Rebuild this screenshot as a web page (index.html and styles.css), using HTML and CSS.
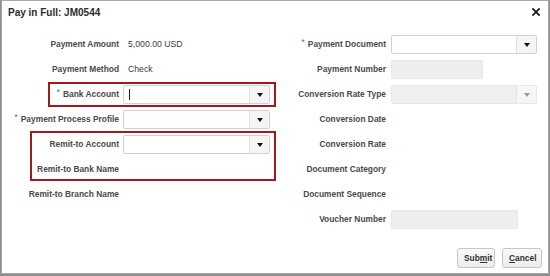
FILE: index.html
```html
<!DOCTYPE html>
<html>
<head>
<meta charset="utf-8">
<link rel="stylesheet" href="styles.css">
</head>
<body>
<div class="dialog">
  <div class="header">
    <span class="title">Pay in Full: JM0544</span>
    <span class="close"><svg width="8" height="8" viewBox="0 0 8 8"><path d="M1 1L7 7M7 1L1 7" stroke="#222" stroke-width="1.8" stroke-linecap="square"/></svg></span>
  </div>
  <div class="form">
    <div class="lbl l">Payment Amount</div>
    <div class="val">5,000.00 USD</div>
    <div class="lbl r"><span class="req">*</span>Payment Document</div>
    <div class="cell"><div class="select w146"><div class="inp"></div><div class="btn"><i class="tri"></i></div></div></div>

    <div class="lbl l">Payment Method</div>
    <div class="val">Check</div>
    <div class="lbl r">Payment Number</div>
    <div class="cell"><div class="ro w92"></div></div>

    <div class="lbl l"><span class="req">*</span>Bank Account</div>
    <div class="cell"><div class="select w147"><div class="inp"><span class="caret"></span></div><div class="btn"><i class="tri"></i></div></div></div>
    <div class="lbl r">Conversion Rate Type</div>
    <div class="cell"><div class="select dis w146"><div class="inp"></div><div class="btn"><i class="tri"></i></div></div></div>

    <div class="lbl l"><span class="req">*</span>Payment Process Profile</div>
    <div class="cell"><div class="select w147"><div class="inp"></div><div class="btn"><i class="tri"></i></div></div></div>
    <div class="lbl r">Conversion Date</div>
    <div class="cell"></div>

    <div class="lbl l">Remit-to Account</div>
    <div class="cell"><div class="select w147"><div class="inp"></div><div class="btn"><i class="tri"></i></div></div></div>
    <div class="lbl r">Conversion Rate</div>
    <div class="cell"></div>

    <div class="lbl l">Remit-to Bank Name</div>
    <div class="cell"></div>
    <div class="lbl r">Document Category</div>
    <div class="cell"></div>

    <div class="lbl l">Remit-to Branch Name</div>
    <div class="cell"></div>
    <div class="lbl r">Document Sequence</div>
    <div class="cell"></div>

    <div class="lbl l"></div>
    <div class="cell"></div>
    <div class="lbl r">Voucher Number</div>
    <div class="cell"><div class="ro w127"></div></div>
  </div>
  <div class="footer">
    <button class="button">Sub<u>m</u>it</button>
    <button class="button"><u>C</u>ancel</button>
  </div>
  <div class="mark mark1"></div>
  <div class="mark mark2"></div>
</div>
</body>
</html>
```

FILE: styles.css
```css
html, body {
  margin: 0;
  padding: 0;
}
body {
  width: 550px;
  height: 276px;
  background: #8e8e8e;
  overflow: hidden;
  font-family: "Liberation Sans", Arial, sans-serif;
  color: #333;
}
.dialog {
  position: relative;
  margin-left: 1px;
  width: 546px;
  height: 272px;
  border: 1px solid #a8a8a8;
  background: #fff;
}
.header {
  height: 22px;
  display: flex;
  align-items: center;
  justify-content: space-between;
  padding: 0 8px 0 6px;
}
.title {
  font-size: 10px;
  font-weight: bold;
  color: #2b2b2b;
  padding-top: 1px;
}
.close {
  display: flex;
  width: 8px;
  height: 8px;
  margin-top: -1px;
}
.form {
  margin-top: 8.5px;
  display: grid;
  grid-template-columns: 121px 150px 118px 152px;
  grid-auto-rows: 25px;
  align-items: center;
}
.lbl {
  font-size: 8.4px;
  font-weight: bold;
  color: #4a4a4a;
  text-align: right;
  white-space: nowrap;
}
.lbl.l { padding-right: 4px; }
.lbl.r { padding-right: 5px; }
.req {
  color: #3d7ac2;
  font-weight: normal;
  font-size: 9px;
  margin-right: 3px;
  position: relative;
  top: -2px;
}
.val {
  font-size: 8.7px;
  color: #3a3a3a;
  padding-left: 5px;
}
.cell {
  display: flex;
  align-items: center;
}
.select {
  box-sizing: border-box;
  height: 19px;
  display: flex;
  border: 1px solid #d2d2d2;
  border-radius: 2px;
  background: #fff;
}
.w146 { width: 146px; }
.w147 { width: 147px; }
.w92 { width: 92px; }
.w127 { width: 127px; }
.inp {
  flex: 1;
  display: flex;
  align-items: center;
  padding-left: 5px;
}
.caret {
  display: block;
  width: 1px;
  height: 11px;
  background: #222;
}
.btn {
  width: 19px;
  border-left: 1px solid #e2e2e2;
  background: #f5f5f5;
  display: flex;
  align-items: center;
  justify-content: center;
}
.tri {
  display: block;
  width: 0;
  height: 0;
  border-left: 3.5px solid transparent;
  border-right: 3.5px solid transparent;
  border-top: 4px solid #111;
  margin-top: 1px;
}
.select.dis {
  background: #efefef;
  border-color: #e6e6e6;
}
.select.dis .btn {
  background: #f6f6f6;
  border-left-color: #e4e4e4;
}
.select.dis .tri {
  border-top-color: #9a9a9a;
}
.ro {
  box-sizing: border-box;
  height: 19px;
  background: #eeeeee;
  border: 1px solid #e8e8e8;
  border-radius: 1px;
}
.footer {
  margin-top: 16.5px;
  display: flex;
  justify-content: flex-end;
  gap: 7px;
  padding-right: 6px;
}
.button {
  box-sizing: border-box;
  height: 20px;
  padding: 0 6px;
  font-family: "Liberation Sans", Arial, sans-serif;
  font-size: 8.4px;
  font-weight: bold;
  color: #333;
  background: linear-gradient(#fafafa, #ececec);
  border: 1px solid #c6c6c6;
  border-radius: 3px;
}
.button:first-child { width: 38px; }
.button:last-child { width: 40px; }
.mark {
  position: absolute;
  box-sizing: border-box;
  border: 2px solid #a3171e;
}
.mark1 {
  left: 46px;
  top: 81px;
  width: 228px;
  height: 25px;
}
.mark2 {
  left: 28px;
  top: 130px;
  width: 246px;
  height: 50px;
}
```
